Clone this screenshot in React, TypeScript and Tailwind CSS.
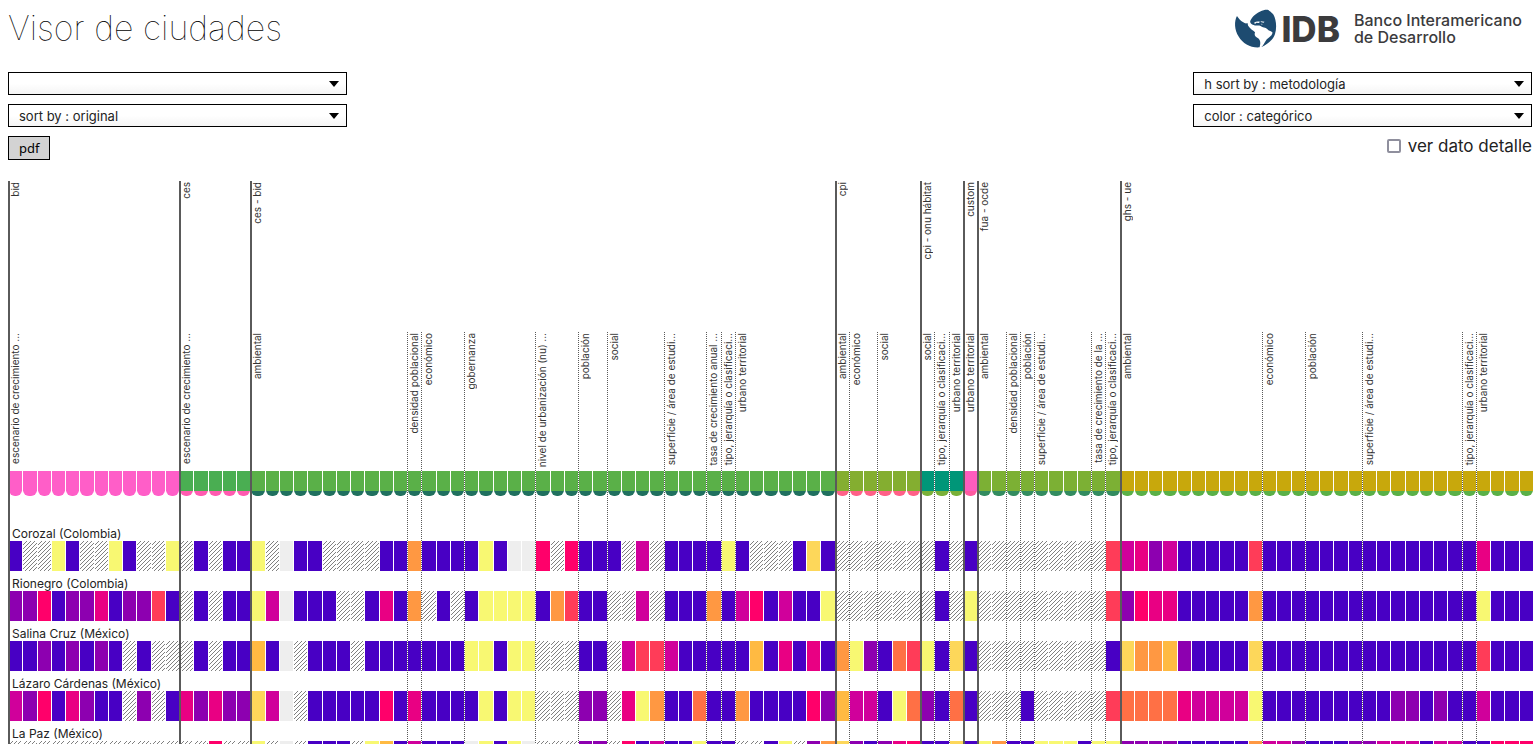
import { ReactNode } from "react";

type Group = { name: string; span: number; bar: string; dot: string };

const groups: Group[] = [
  { name: "bid", span: 12, bar: "bg-[#ff5ec8]", dot: "bg-[#ff5ec8]" },
  { name: "ces", span: 5, bar: "bg-[#4aae52]", dot: "bg-[#ff5ab0]" },
  { name: "ces - bid", span: 41, bar: "bg-[#5ab048]", dot: "bg-[#20705f]" },
  { name: "cpi", span: 6, bar: "bg-[#84ae30]", dot: "bg-[#ff6088]" },
  { name: "cpi - onu hábitat", span: 3, bar: "bg-[#009678]", dot: "bg-[#7ab038]" },
  { name: "custom", span: 1, bar: "bg-[#ff5cbe]", dot: "bg-[#ff5aa0]" },
  { name: "fua - ocde", span: 10, bar: "bg-[#7cb034]", dot: "bg-[#338c60]" },
  { name: "ghs - ue", span: 29, bar: "bg-[#c8a80c]", dot: "bg-[#5ab048]" },
];

const topics: [number, string][] = [
  [0, "escenario de crecimiento ..."],
  [12, "escenario de crecimiento ..."],
  [17, "ambiental"],
  [28, "densidad poblacional"],
  [29, "económico"],
  [32, "gobernanza"],
  [37, "nivel de urbanización (nu) ..."],
  [40, "población"],
  [42, "social"],
  [46, "superficie / área de estudi..."],
  [49, "tasa de crecimiento anual ..."],
  [50, "tipo, jerarquía o clasificaci..."],
  [51, "urbano territorial"],
  [58, "ambiental"],
  [59, "económico"],
  [61, "social"],
  [64, "social"],
  [65, "tipo, jerarquía o clasificaci..."],
  [66, "urbano territorial"],
  [67, "urbano territorial"],
  [68, "ambiental"],
  [70, "densidad poblacional"],
  [71, "población"],
  [72, "superficie / área de estudi..."],
  [76, "tasa de crecimiento de la ..."],
  [77, "tipo, jerarquía o clasificaci..."],
  [78, "ambiental"],
  [88, "económico"],
  [91, "población"],
  [95, "superficie / área de estudi..."],
  [102, "tipo, jerarquía o clasificaci..."],
  [103, "urbano territorial"],
];

const shades: Record<string, string> = {
  a: "bg-[#4800c4]",
  b: "bg-[#8d00b0]",
  c: "bg-[#d0009b]",
  d: "bg-[#e90083]",
  e: "bg-[#ff006a]",
  f: "bg-[#ff3c58]",
  g: "bg-[#ff7045]",
  h: "bg-[#ff9842]",
  i: "bg-[#ffba42]",
  j: "bg-[#fdd75a]",
  k: "bg-[#f8f872]",
  l: "bg-[#eeeeee]",
  ".": "bg-[linear-gradient(135deg,transparent_43%,#808080_43%,#808080_57%,transparent_57%)] bg-[length:4px_4px]",
};

// One letter per indicator, split by methodology; a dot is a missing value.
const cities = [
  {
    name: "Corozal (Colombia)",
    cells: [
      "a..ka..ka..k", ".a.aa", "k.laa....aahaaaakalle.eaaa.c.aaaaka...aja", "......", ".a.", "a",
      ".........f", "cdbcaaaaafaaaaaaaaaaaaaaadaaa",
    ],
  },
  {
    name: "Rionegro (Colombia)",
    cells: [
      "bbeabbdabbfa", ".a.aa", "kclaaa..adah.a.akkkkahfaa..c.aaahaceacaak", "......", ".a.", "k",
      ".........f", "beddaaaaahaaaaaaaaaaaaaaakaaa",
    ],
  },
  {
    name: "Salina Cruz (México)",
    cells: [
      "aabababa.a..", ".a.aa", "ial.aaa.aaaaaaakkakk...aa.cffcaaaaaiadada", "hkbagf", "kaj", "a",
      ".........a", "jhhibaaaajaaaaaaaaaaaaaaafaaa",
    ],
  },
  {
    name: "Lázaro Cárdenas (México)",
    cells: [
      "cbeadbaa.b.a", "dbdbb", "jcl.aaaaaeadaaaakakk...bb.dkhaagaahaaaaeb", "iccakg", "bag", "a",
      "...a.....f", "ggggdcccckaaaaaaaaabbabaacaaa",
    ],
  },
  {
    name: "La Paz (México)",
    cells: [
      "............", "..e..", "k.l.aaa.kiacaaalkakl...bb.eacaakaa..ak.bh", "jbabde", "aaj", "a",
      "khaakkkakk", "bbbbaaaaahccbaaabbcccaccaaeee",
    ],
  },
];

const columns = "grid grid-cols-[repeat(107,minmax(0,1fr))]";

function VerticalLabel({ children }: { children: ReactNode }) {
  return (
    <span className="block rotate-180 whitespace-nowrap text-[10px] leading-[10px] text-[#333] [writing-mode:vertical-rl]">
      {children}
    </span>
  );
}

function Picker({ label, value }: { label: string; value: string }) {
  return (
    <div className="grid items-center">
      <select
        aria-label={label}
        className="col-start-1 row-start-1 h-[23px] w-full appearance-none border border-black bg-linear-to-b from-white from-50% to-[#f5f5f5] px-[10px] text-[13px] leading-[20px] text-[#222]"
      >
        <option>{value}</option>
      </select>
      <svg
        viewBox="0 0 10 6"
        className="pointer-events-none col-start-1 row-start-1 mr-2 h-[6px] w-[10px] justify-self-end"
        aria-hidden="true"
      >
        <path d="M0 0h10L5 6z" />
      </svg>
    </div>
  );
}

function Logo() {
  return (
    <div className="flex items-center text-[#3b3b3d]">
      <svg viewBox="28 15 129 119" className="h-[39px] w-[43px]" aria-hidden="true">
        <g fill="#1d4b70">
          <path d="M36 36C27 52 28 78 41 99C54 121 78 134 105 132L107 122C108 113 105 107 98 103C91 99 88 93 91 86L86 81C79 78 75 72 70 66L68 58C64 60 59 59 54 55C47 51 41 43 36 36Z" />
          <path d="M76 55C78 44 90 31 107 23C116 18 126 16 132 18C135 22 141 24 147 32C156 48 158 72 152 91C147 106 133 122 110 132C118 124 121 114 127 107C136 101 145 94 144 86C139 82 133 82 129 77C123 70 114 72 108 67C101 63 97 67 91 65C86 64 78 62 76 55Z" />
        </g>
        <path
          d="M88 57C94 53 100 53 106 54L103 58L95 57L91 61ZM108 52L120 54L117 57L109 55ZM110 60L114 61L112 64Z"
          fill="#fff"
        />
      </svg>
      <span className="ml-1 text-[35px] font-extrabold leading-[38px]">IDB</span>
      <span className="ml-[14px] flex flex-col text-[16px] font-medium leading-[17px]">
        <span>Banco Interamericano</span>
        <span>de Desarrollo</span>
      </span>
    </div>
  );
}

export default function App() {
  let start = 1;
  const placed = groups.map((group) => {
    const column = `${start} / span ${group.span}`;
    start += group.span;
    return { ...group, column };
  });

  return (
    <main className="bg-white px-2 font-['Inter','Noto_Sans',sans-serif] text-[#222]">
      <header className="flex h-[72px] items-start justify-between">
        <h1 className="pt-[7px] text-[34px] font-thin leading-[42px] text-black">Visor de ciudades</h1>
        <div className="pr-[10px] pt-[9px]">
          <Logo />
        </div>
      </header>

      <div className="flex items-start justify-between">
        <div className="flex w-2/9 flex-col gap-[9px]">
          <Picker label="ciudad" value="" />
          <Picker label="orden vertical" value="sort by : original" />
          <button
            type="button"
            className="h-6 self-start border border-black bg-[#d3d3d3] px-[10px] font-['Noto_Sans',sans-serif] text-[13px] leading-[20px] text-black"
          >
            pdf
          </button>
        </div>
        <div className="flex w-2/9 flex-col gap-[9px]">
          <Picker label="orden horizontal" value="h sort by : metodología" />
          <Picker label="color" value="color : categórico" />
          <label className="flex items-center justify-end gap-[7px] text-[17px] leading-[20px]">
            <input
              type="checkbox"
              className="size-[14px] appearance-none rounded-[2px] border-2 border-[#8f8f9d] bg-white"
            />
            ver dato detalle
          </label>
        </div>
      </div>

      <section className="-mr-px mt-[21px] grid">
        <div className="col-start-1 row-start-1 pt-[290px]">
          <div className={columns}>
            {placed.flatMap((group) =>
              Array.from({ length: group.span }, (_, i) => (
                <div key={`${group.name}-${i}`} className="grid h-[25px] pl-px">
                  <i className={`col-start-1 row-start-1 h-3 self-end rounded-full ${group.dot}`} />
                  <i className={`col-start-1 row-start-1 h-5 ${group.bar}`} />
                </div>
              )),
            )}
          </div>
          <div className="pt-[25px]">
            {cities.map((city) => (
              <article key={city.name}>
                <h2 className="h-5 pl-1 pt-[5px] text-[12px] leading-[16px]">{city.name}</h2>
                <div className={columns}>
                  {city.cells
                    .join("")
                    .split("")
                    .map((code, i) => (
                      <div key={i} className="h-[30px] pl-px">
                        <i className={`block h-full ${shades[code]}`} />
                      </div>
                    ))}
                </div>
              </article>
            ))}
          </div>
        </div>

        <div className={`pointer-events-none col-start-1 row-start-1 mt-[151px] ${columns}`}>
          {topics.map(([column, name]) => (
            <div
              key={column}
              className="row-start-1 flex items-start border-l border-dotted border-[#5a5a5a] pl-px pt-px"
              style={{ gridColumnStart: column + 1 }}
            >
              <VerticalLabel>{name}</VerticalLabel>
            </div>
          ))}
        </div>

        <div className={`pointer-events-none col-start-1 row-start-1 ${columns}`}>
          {placed.map((group) => (
            <div
              key={group.name}
              className="row-start-1 flex items-start border-l-2 border-[#5a5a5a] pt-px"
              style={{ gridColumn: group.column }}
            >
              <VerticalLabel>{group.name}</VerticalLabel>
            </div>
          ))}
        </div>
      </section>
    </main>
  );
}
